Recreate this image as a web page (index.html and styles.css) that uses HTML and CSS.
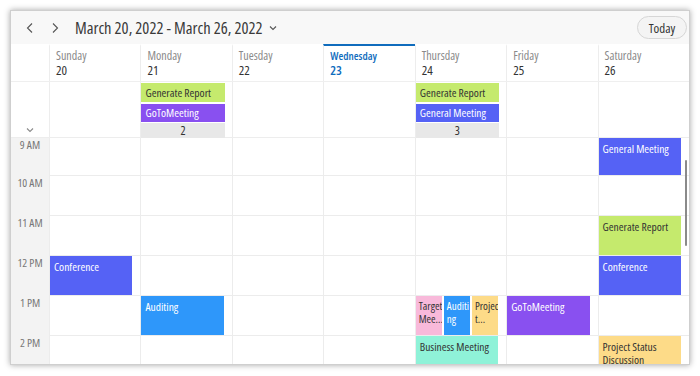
FILE: index.html
```html
<!DOCTYPE html>
<html lang="en">
<head>
  <meta charset="UTF-8" />
  <meta name="viewport" content="width=device-width, initial-scale=1.0" />
  <title>Scheduler - Week view</title>
  <link rel="stylesheet" href="styles.css">
</head>
<body>
  <div class="scheduler">
    <div class="toolbar">
      <button class="nav-btn" title="Previous week">
        <svg width="8" height="12" viewBox="0 0 8 12"><polyline points="6,1.5 1.5,6 6,10.5" /></svg>
      </button>
      <button class="nav-btn" title="Next week">
        <svg width="8" height="12" viewBox="0 0 8 12"><polyline points="2,1.5 6.5,6 2,10.5" /></svg>
      </button>
      <div class="title">
        March 20, 2022 - March 26, 2022
        <svg class="title-chevron" width="8" height="6" viewBox="0 0 8 6"><polyline points="1,1.5 4,4.5 7,1.5" /></svg>
      </div>
      <button class="today-btn">Today</button>
    </div>

    <div class="day-header">
      <div class="corner"></div>
      <div class="day"><span class="day-name">Sunday</span><span class="day-date">20</span></div>
      <div class="day"><span class="day-name">Monday</span><span class="day-date">21</span></div>
      <div class="day"><span class="day-name">Tuesday</span><span class="day-date">22</span></div>
      <div class="day today"><span class="day-name">Wednesday</span><span class="day-date">23</span></div>
      <div class="day"><span class="day-name">Thursday</span><span class="day-date">24</span></div>
      <div class="day"><span class="day-name">Friday</span><span class="day-date">25</span></div>
      <div class="day"><span class="day-name">Saturday</span><span class="day-date">26</span></div>
    </div>

    <div class="all-day">
      <div class="corner collapse">
        <svg width="8" height="6" viewBox="0 0 8 6"><polyline points="1,1.5 4,4.5 7,1.5" /></svg>
      </div>
      <div class="all-day-cell"></div>
      <div class="all-day-cell">
        <div class="all-day-appt green">Generate Report</div>
        <div class="all-day-appt purple">GoToMeeting</div>
        <div class="more">2</div>
      </div>
      <div class="all-day-cell"></div>
      <div class="all-day-cell"></div>
      <div class="all-day-cell">
        <div class="all-day-appt green">Generate Report</div>
        <div class="all-day-appt blue">General Meeting</div>
        <div class="more">3</div>
      </div>
      <div class="all-day-cell"></div>
      <div class="all-day-cell"></div>
    </div>

    <div class="time-view">
      <div class="time-grid">
        <!-- 9 AM -->
        <div class="time-label">9 AM</div>
        <div class="cell"></div>
        <div class="cell"></div>
        <div class="cell"></div>
        <div class="cell"></div>
        <div class="cell"></div>
        <div class="cell"></div>
        <div class="cell"><div class="appt blue">General Meeting</div></div>

        <!-- 10 AM -->
        <div class="time-label">10 AM</div>
        <div class="cell"></div>
        <div class="cell"></div>
        <div class="cell"></div>
        <div class="cell"></div>
        <div class="cell"></div>
        <div class="cell"></div>
        <div class="cell"></div>

        <!-- 11 AM -->
        <div class="time-label">11 AM</div>
        <div class="cell"></div>
        <div class="cell"></div>
        <div class="cell"></div>
        <div class="cell"></div>
        <div class="cell"></div>
        <div class="cell"></div>
        <div class="cell"><div class="appt green">Generate Report</div></div>

        <!-- 12 PM -->
        <div class="time-label">12 PM</div>
        <div class="cell"><div class="appt blue">Conference</div></div>
        <div class="cell"></div>
        <div class="cell"></div>
        <div class="cell"></div>
        <div class="cell"></div>
        <div class="cell"></div>
        <div class="cell"><div class="appt blue">Conference</div></div>

        <!-- 1 PM -->
        <div class="time-label">1 PM</div>
        <div class="cell"></div>
        <div class="cell"><div class="appt sky">Auditing</div></div>
        <div class="cell"></div>
        <div class="cell"></div>
        <div class="cell split">
          <div class="appt pink narrow">Target<br>Mee...</div>
          <div class="appt sky narrow">Auditi<br>ng</div>
          <div class="appt yellow narrow">Projec<br>t...</div>
        </div>
        <div class="cell"><div class="appt purple">GoToMeeting</div></div>
        <div class="cell"></div>

        <!-- 2 PM -->
        <div class="time-label">2 PM</div>
        <div class="cell"></div>
        <div class="cell"></div>
        <div class="cell"></div>
        <div class="cell"></div>
        <div class="cell"><div class="appt mint">Business Meeting</div></div>
        <div class="cell"></div>
        <div class="cell"><div class="appt yellow">Project Status Discussion</div></div>
      </div>
      <div class="scrollbar"></div>
    </div>
  </div>
</body>
</html>
```

FILE: styles.css
```css
body {
  margin: 0;
  padding: 0;
  background: #ffffff;
  font-family: "Open Sans", sans-serif;
  font-stretch: 75%;
  color: #333;
}

button {
  font-family: inherit;
  font-stretch: inherit;
}

.scheduler {
  box-sizing: border-box;
  width: 680px;
  height: 355px;
  margin: 10px;
  border: 1px solid #cfcfcf;
  box-shadow: 0 0 6px rgba(0, 0, 0, 0.35);
  background: #fff;
  display: flex;
  flex-direction: column;
  overflow: hidden;
}

/* toolbar */
.toolbar {
  height: 33px;
  flex: none;
  display: flex;
  align-items: center;
  background: #f8f8f8;
  padding: 0 2px 0 13px;
}

.nav-btn {
  width: 12px;
  height: 16px;
  padding: 0;
  border: none;
  background: none;
  display: flex;
  align-items: center;
  justify-content: center;
  margin-right: 13px;
  cursor: pointer;
}

.nav-btn svg polyline,
.title-chevron polyline,
.collapse svg polyline {
  fill: none;
  stroke: #555;
  stroke-width: 1.1;
}

.title {
  display: flex;
  align-items: center;
  gap: 7px;
  font-size: 16.5px;
  color: #3a3a3a;
  margin-left: 1px;
}

.today-btn {
  margin-left: auto;
  width: 50px;
  height: 23px;
  border: 1px solid #d6d6d6;
  border-radius: 12px;
  background: #f4f4f4;
  font-size: 13px;
  color: #333;
  padding: 0;
  cursor: pointer;
}

/* day header */
.day-header,
.all-day,
.time-grid {
  display: grid;
  grid-template-columns: 38px repeat(7, minmax(0, 1fr));
}

.day-header,
.all-day {
  flex: none;
}

.day-header {
  height: 38px;
  border-bottom: 1px solid #efefef;
  box-sizing: border-box;
}

.day {
  border-left: 1px solid #ededed;
  border-top: 2px solid transparent;
  padding: 3px 0 0 6px;
  display: flex;
  flex-direction: column;
}

.day-name {
  font-size: 12px;
  line-height: 14px;
  color: #8a8a8a;
}

.day-date {
  font-size: 13px;
  line-height: 15px;
  color: #333;
}

.day.today {
  border-top-color: #0f6cbd;
}

.day.today .day-name,
.day.today .day-date {
  color: #0f6cbd;
  font-weight: 600;
}

.day.today .day-name {
  font-size: 11px;
}

/* all day row */
.all-day {
  height: 56px;
  box-sizing: border-box;
  border-bottom: 1px solid #ededed;
}

.collapse {
  display: flex;
  align-items: flex-end;
  justify-content: center;
  padding-bottom: 5px;
}

.collapse svg polyline {
  stroke: #8a8a8a;
}

.all-day-cell {
  border-left: 1px solid #ededed;
  padding: 1px 7px 0 0;
  display: flex;
  flex-direction: column;
  gap: 2px;
}

.all-day-appt {
  height: 18px;
  line-height: 18px;
  font-size: 11.5px;
  padding: 0 4px;
  white-space: nowrap;
  overflow: hidden;
}

.all-day-appt:first-child {
  height: 19px;
  line-height: 19px;
}

.more {
  height: 15px;
  line-height: 15px;
  margin-top: -1px;
  background: #e8e8e8;
  text-align: center;
  font-size: 12px;
  color: #333;
}

/* time slots */
.time-view {
  position: relative;
  flex: 1;
  overflow: hidden;
}

.time-grid {
  grid-template-rows: 38px;
  grid-auto-rows: 40px;
}

.time-label {
  background: #f3f3f3;
  font-size: 11.5px;
  line-height: 13px;
  text-align: center;
  color: #777;
}

.cell {
  border-left: 1px solid #ececec;
  border-bottom: 1px solid #ececec;
  padding-right: 8px;
  box-sizing: border-box;
}

.cell.split {
  display: flex;
  gap: 2px;
}

.appt {
  box-sizing: border-box;
  height: 100%;
  padding: 4px 4px 0;
  font-size: 11.5px;
  line-height: 13px;
  color: #fff;
  overflow: hidden;
}

.appt.narrow {
  flex: 1;
  min-width: 0;
  font-size: 11px;
  line-height: 12.5px;
  white-space: nowrap;
  padding: 4px 0 0 3px;
}

.green { background: #c5ea6d; color: #333; }
.purple { background: #8950f0; color: #fff; }
.blue { background: #5562f5; color: #fff; }
.sky { background: #2e97fa; color: #fff; }
.pink { background: #f8b9da; color: #333; }
.yellow { background: #fddb88; color: #333; }
.mint { background: #8ff2d8; color: #333; }

.scrollbar {
  position: absolute;
  right: 2px;
  top: 22px;
  width: 2px;
  height: 86px;
  border-radius: 1px;
  background: #8a8a8a;
}
```
